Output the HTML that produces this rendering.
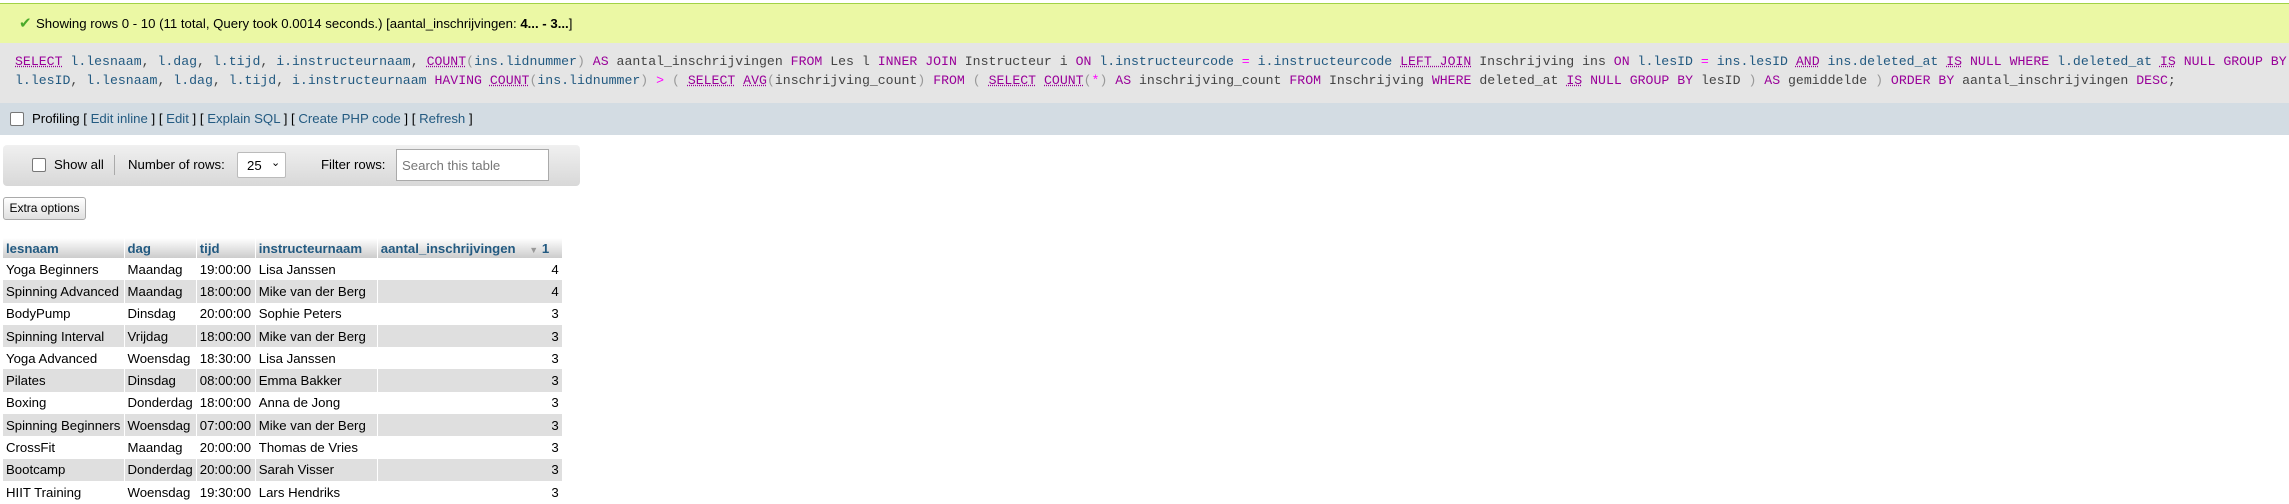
<!DOCTYPE html>
<html><head><meta charset="utf-8"><style>
body{margin:0;width:2289px;height:504px;background:#fff;font-family:"Liberation Sans",Arial,sans-serif;color:#000;overflow:hidden;position:relative}
.abs{position:absolute}
#ok{left:0;top:3px;width:2289px;height:40px;background:#ebf8a4;border-top:1px solid #a2d246;box-sizing:border-box;font-size:13.2px;line-height:40px}
#sql{left:0;top:43px;width:2289px;height:60px;background:#e5e5e5;font-family:"Liberation Mono",monospace;font-size:13.2px;color:#444;white-space:pre}
#sql div{position:absolute;left:15px}
.k{color:#909}.f{color:#909;text-decoration:underline dotted}.c{color:#235a81}.o{color:#f0f}.p{color:#999}.u{text-decoration:underline dotted}
#prof{left:0;top:103px;width:2289px;height:32px;background:#d3dce3;font-size:13.2px;line-height:32px}
#prof a{color:#235a81}
#nav{left:3px;top:145px;width:577px;height:41px;background:linear-gradient(#f0f0f0,#d8d8d8);border-radius:4px;font-size:13.2px}
#nav span{position:absolute;white-space:nowrap}
.cb{position:absolute;width:12px;height:12px;border:1px solid #777;border-radius:2px;background:#fff}
#btn{left:3px;top:197px;width:83px;height:23px;box-sizing:border-box;border:1px solid #aaa;border-radius:3px;background:linear-gradient(#fff,#e0e0e0);font-size:12px;line-height:21px;text-align:center;white-space:nowrap}
table{position:absolute;left:3px;top:238px;border-collapse:collapse;font-size:13.2px;table-layout:fixed}
th{height:20px;padding:0 3px;text-align:left;color:#235a81;background:linear-gradient(#fff,#ccc);border-right:1px solid #fff;font-weight:bold;vertical-align:middle;white-space:nowrap;overflow:hidden}
td{height:22.3px;padding:0 3px;white-space:nowrap;border-right:1px solid #fff;overflow:hidden}
tr.e td{background:#dfdfdf}
</style></head><body>
<div id="ok" class="abs"><span style="color:#4aaa2a;font-size:15px;position:absolute;left:19px">✔</span><span style="position:absolute;left:36px">Showing rows 0 - 10 (11 total, Query took 0.0014 seconds.) [aantal_inschrijvingen: <b>4... - 3...</b>]</span></div>
<div id="sql" class="abs"><div style="top:11px"><span class="k u">SELECT</span> <span class="c">l.lesnaam</span>, <span class="c">l.dag</span>, <span class="c">l.tijd</span>, <span class="c">i.instructeurnaam</span>, <span class="f">COUNT</span><span class="p">(</span><span class="c">ins.lidnummer</span><span class="p">)</span> <span class="k">AS</span> aantal_inschrijvingen <span class="k">FROM</span> Les l <span class="k">INNER JOIN</span> Instructeur i <span class="k">ON</span> <span class="c">l.instructeurcode</span> <span class="o">=</span> <span class="c">i.instructeurcode</span> <span class="k u">LEFT JOIN</span> Inschrijving ins <span class="k">ON</span> <span class="c">l.lesID</span> <span class="o">=</span> <span class="c">ins.lesID</span> <span class="k u">AND</span> <span class="c">ins.deleted_at</span> <span class="k u">IS</span> <span class="k">NULL</span> <span class="k">WHERE</span> <span class="c">l.deleted_at</span> <span class="k u">IS</span> <span class="k">NULL</span> <span class="k">GROUP BY</span></div><div style="top:30px"><span class="c">l.lesID</span>, <span class="c">l.lesnaam</span>, <span class="c">l.dag</span>, <span class="c">l.tijd</span>, <span class="c">i.instructeurnaam</span> <span class="k">HAVING</span> <span class="f">COUNT</span><span class="p">(</span><span class="c">ins.lidnummer</span><span class="p">)</span> <span class="o">&gt;</span> <span class="p">(</span> <span class="k u">SELECT</span> <span class="f">AVG</span><span class="p">(</span>inschrijving_count<span class="p">)</span> <span class="k">FROM</span> <span class="p">(</span> <span class="k u">SELECT</span> <span class="f">COUNT</span><span class="p">(</span><span class="o">*</span><span class="p">)</span> <span class="k">AS</span> inschrijving_count <span class="k">FROM</span> Inschrijving <span class="k">WHERE</span> deleted_at <span class="k u">IS</span> <span class="k">NULL</span> <span class="k">GROUP BY</span> lesID <span class="p">)</span> <span class="k">AS</span> gemiddelde <span class="p">)</span> <span class="k">ORDER BY</span> aantal_inschrijvingen <span class="k">DESC</span>;</div></div>
<div id="prof" class="abs"><span class="cb" style="left:10px;top:9px"></span><span style="position:absolute;left:32px">Profiling [ <a>Edit inline</a> ] [ <a>Edit</a> ] [ <a>Explain SQL</a> ] [ <a>Create PHP code</a> ] [ <a>Refresh</a> ]</span></div>
<div id="nav" class="abs"><span class="cb" style="left:29px;top:13px"></span><span style="left:51px;top:12px">Show all</span><span style="left:111px;top:10px;width:1px;height:20px;background:#aaa"></span><span style="left:125px;top:12px">Number of rows:</span><span style="left:234px;top:7px;width:49px;height:26px;box-sizing:border-box;border:1px solid #bbb;border-radius:2px;background:#fff;padding:5px 0 0 9px">25<span style="position:absolute;left:33px;top:3px;font-size:11px">⌄</span></span><span style="left:318px;top:12px">Filter rows:</span><span style="left:393px;top:4px;width:153px;height:32px;box-sizing:border-box;border:1px solid #aaa;background:#fff;color:#777;padding:8px 0 0 5px">Search this table</span></div>
<div id="btn" class="abs">Extra options</div>
<table>
<colgroup><col style="width:121px"><col style="width:72px"><col style="width:59px"><col style="width:122px"><col style="width:185px"></colgroup>
<tr><th>lesnaam</th><th>dag</th><th>tijd</th><th>instructeurnaam</th><th>aantal_inschrijvingen <span style="color:#999;font-size:9px;margin-left:10px">▼</span> 1</th></tr>
<tr><td>Yoga Beginners</td><td>Maandag</td><td>19:00:00</td><td>Lisa Janssen</td><td align="right">4</td></tr>
<tr class="e"><td>Spinning Advanced</td><td>Maandag</td><td>18:00:00</td><td>Mike van der Berg</td><td align="right">4</td></tr>
<tr><td>BodyPump</td><td>Dinsdag</td><td>20:00:00</td><td>Sophie Peters</td><td align="right">3</td></tr>
<tr class="e"><td>Spinning Interval</td><td>Vrijdag</td><td>18:00:00</td><td>Mike van der Berg</td><td align="right">3</td></tr>
<tr><td>Yoga Advanced</td><td>Woensdag</td><td>18:30:00</td><td>Lisa Janssen</td><td align="right">3</td></tr>
<tr class="e"><td>Pilates</td><td>Dinsdag</td><td>08:00:00</td><td>Emma Bakker</td><td align="right">3</td></tr>
<tr><td>Boxing</td><td>Donderdag</td><td>18:00:00</td><td>Anna de Jong</td><td align="right">3</td></tr>
<tr class="e"><td>Spinning Beginners</td><td>Woensdag</td><td>07:00:00</td><td>Mike van der Berg</td><td align="right">3</td></tr>
<tr><td>CrossFit</td><td>Maandag</td><td>20:00:00</td><td>Thomas de Vries</td><td align="right">3</td></tr>
<tr class="e"><td>Bootcamp</td><td>Donderdag</td><td>20:00:00</td><td>Sarah Visser</td><td align="right">3</td></tr>
<tr><td>HIIT Training</td><td>Woensdag</td><td>19:30:00</td><td>Lars Hendriks</td><td align="right">3</td></tr>
</table>
</body></html>
